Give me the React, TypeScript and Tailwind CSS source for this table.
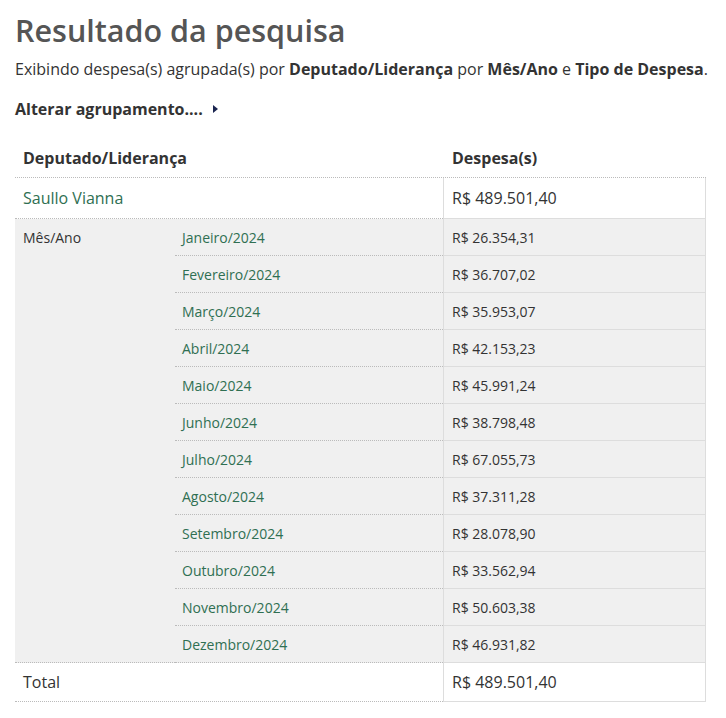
import React from "react";

const months: [string, string][] = [
  ["Janeiro/2024", "R$ 26.354,31"],
  ["Fevereiro/2024", "R$ 36.707,02"],
  ["Março/2024", "R$ 35.953,07"],
  ["Abril/2024", "R$ 42.153,23"],
  ["Maio/2024", "R$ 45.991,24"],
  ["Junho/2024", "R$ 38.798,48"],
  ["Julho/2024", "R$ 67.055,73"],
  ["Agosto/2024", "R$ 37.311,28"],
  ["Setembro/2024", "R$ 28.078,90"],
  ["Outubro/2024", "R$ 33.562,94"],
  ["Novembro/2024", "R$ 50.603,38"],
  ["Dezembro/2024", "R$ 46.931,82"],
];

export default function App() {
  return (
    <div
      className="min-h-[718px] w-[726px] bg-white pl-[15px] pt-[10px] text-[#333]"
      style={{ fontFamily: "'Open Sans', 'Liberation Sans', sans-serif" }}
    >
      <h1 className="text-[30.5px] leading-[40px] font-semibold text-[#555]">
        Resultado da pesquisa
      </h1>
      <p className="mt-[9px] text-[16px] leading-[20px] text-[#333]">
        Exibindo despesa(s) agrupada(s) por <b className="font-bold">Deputado/Liderança</b> por{" "}
        <b className="font-bold">Mês/Ano</b> e <b className="font-bold">Tipo de Despesa</b>.
      </p>
      <div className="mt-[20px] flex items-center text-[16px] leading-[20px] font-bold text-[#333]">
        <span>Alterar agrupamento....</span>
        <span className="ml-[10px] h-0 w-0 border-y-[4px] border-l-[5px] border-y-transparent border-l-[#1b2550]" />
      </div>

      <div className="mt-[19px] w-[691px]">
        {/* header */}
        <div className="flex h-[40px] items-center border-b border-dotted border-[#bbb] text-[16px] font-bold text-[#333]">
          <div className="w-[428px] pl-[8px]">Deputado/Liderança</div>
          <div className="pl-[9px]">Despesa(s)</div>
        </div>
        {/* deputado row */}
        <div className="flex h-[41px]">
          <div className="flex w-[428px] items-center border-b border-dotted border-[#bbb] pl-[8px] text-[16px] text-[#2f6f52]">
            Saullo Vianna
          </div>
          <div className="flex flex-1 items-center border-x border-b border-[#ddd] pl-[8px] text-[16px] text-[#333]">
            R$ 489.501,40
          </div>
        </div>
        {/* month block */}
        <div className="flex bg-[#f0f0f0]">
          <div className="w-[160px] border-b border-dotted border-[#bbb] pl-[8px] pt-[9px] text-[14px] leading-[20px] text-[#333]">
            Mês/Ano
          </div>
          <div className="flex-1">
            {months.map(([m, v]) => (
              <div key={m} className="flex h-[37px]">
                <div className="flex w-[268px] items-center border-b border-dotted border-[#bbb] pl-[7px] text-[14px] text-[#2f6f52]">
                  {m}
                </div>
                <div className="flex flex-1 items-center border-x border-b border-[#ddd] pl-[8px] text-[14px] text-[#333]">
                  {v}
                </div>
              </div>
            ))}
          </div>
        </div>
        {/* total */}
        <div className="flex h-[39px]">
          <div className="flex w-[428px] items-center border-b border-dotted border-[#bbb] pl-[8px] text-[16px] text-[#333]">
            Total
          </div>
          <div className="flex flex-1 items-center border-x border-b border-[#ddd] pl-[8px] text-[16px] text-[#333]">
            R$ 489.501,40
          </div>
        </div>
      </div>
    </div>
  );
}
